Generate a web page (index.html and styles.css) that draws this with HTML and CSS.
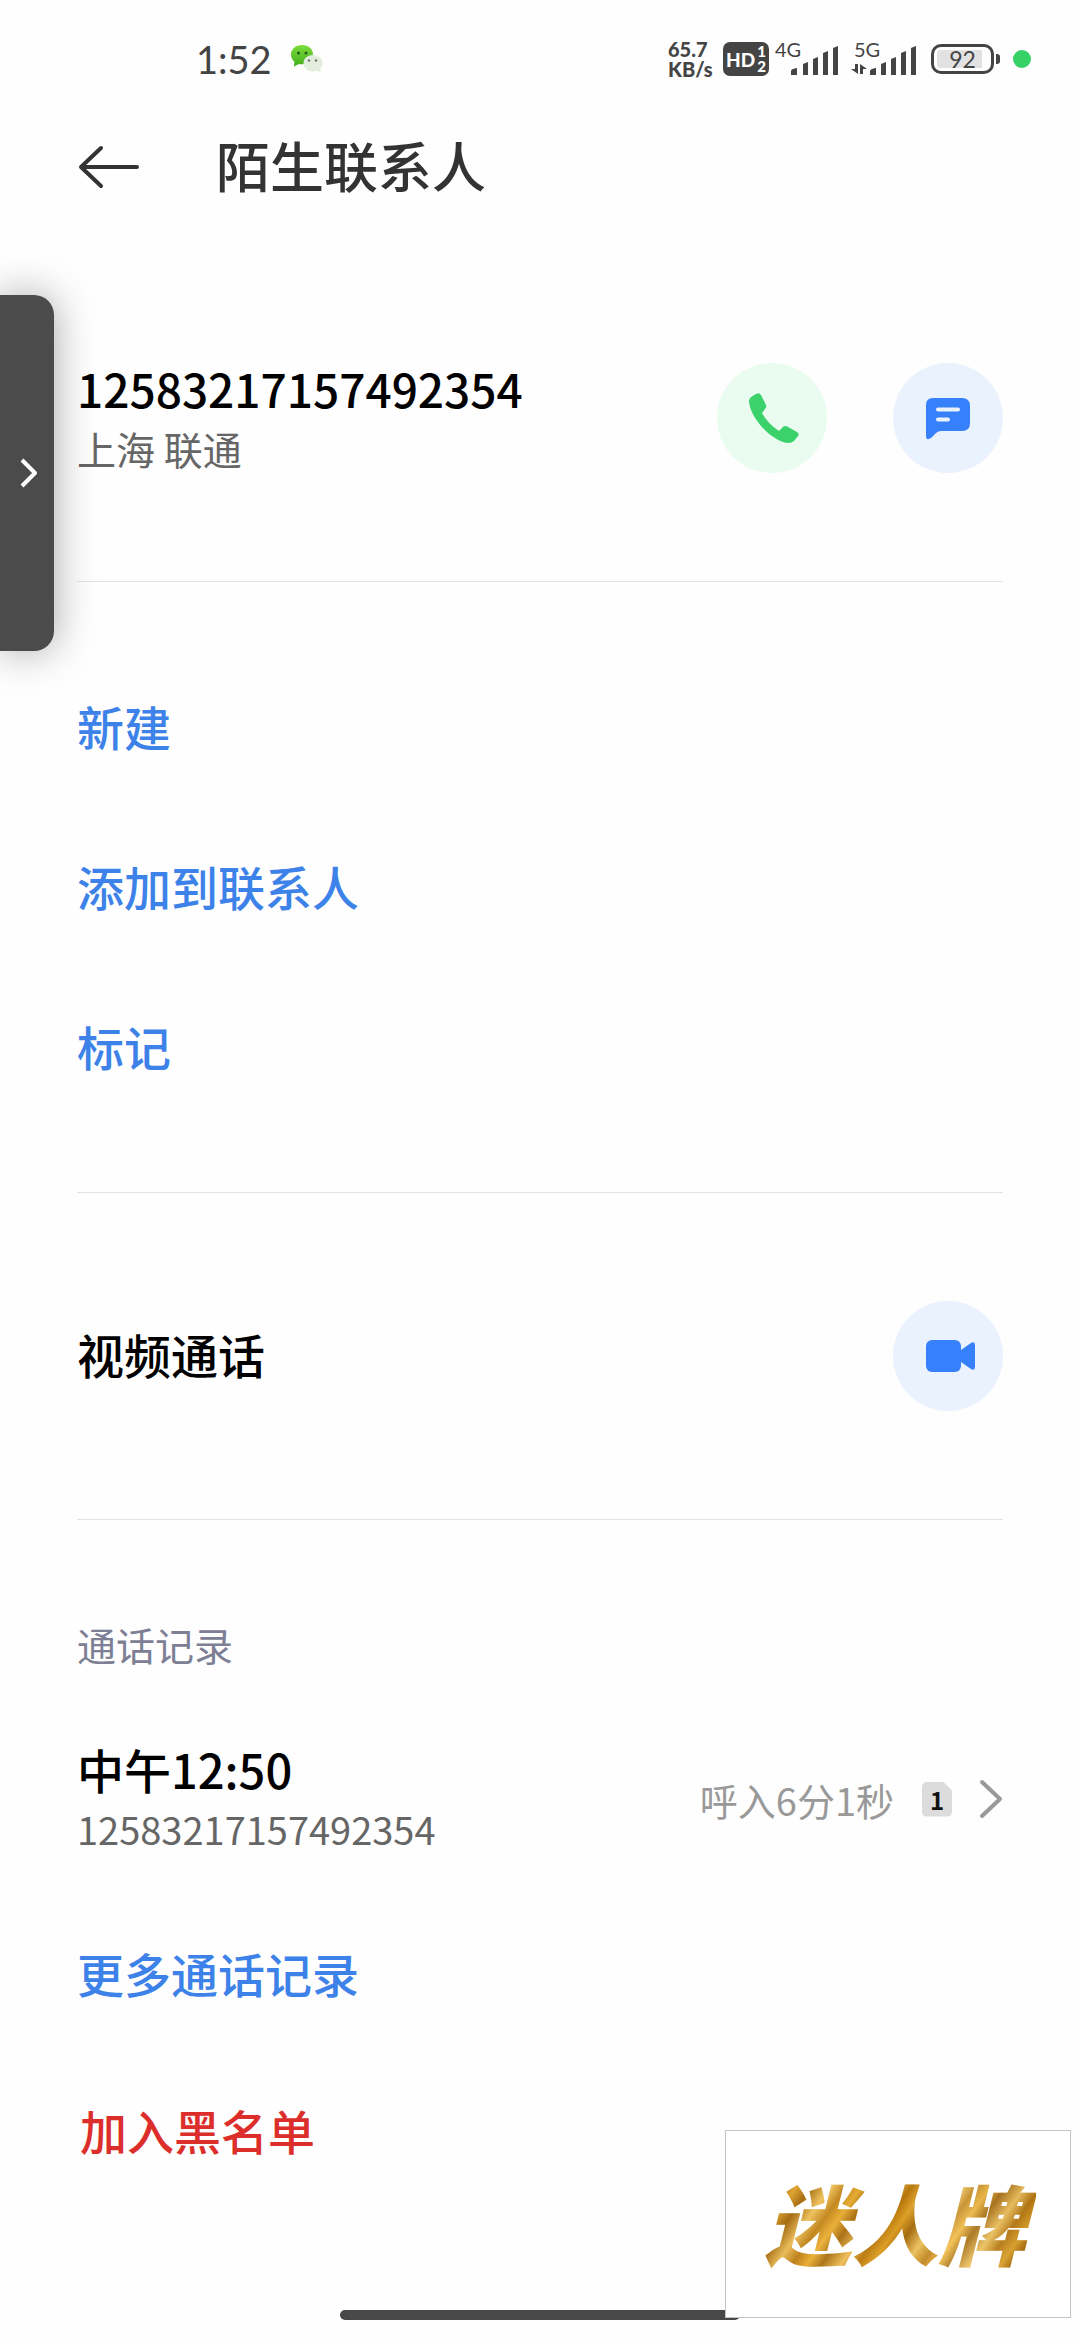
FILE: index.html
```html
<!DOCTYPE html>
<html lang="zh-CN">
    <head>
        <meta charset="UTF-8" />
        <title>陌生联系人</title>
        <meta name="viewport" content="width=device-width, initial-scale=1.0" />
        <link rel="stylesheet" href="styles.css">
    </head>
    <body>
        <div class="status-bar">
            <div class="status-left">
                <span class="clock">1:52</span>
                <svg class="wechat" viewBox="0 0 34 30">
                    <defs>
                        <linearGradient id="wechat-green" x1="0" y1="0" x2="0" y2="1">
                            <stop offset="0" stop-color="#7fdc3c" />
                            <stop offset="1" stop-color="#3fae1c" />
                        </linearGradient>
                    </defs>
                    <path fill="url(#wechat-green)" d="M12 1C5.500 1 1 5.200 1 10.500c0 3 1.400 5.500 3.400 7.200L4 22.500l5-2.600c1 .2 2 .3 3 .3 6.500 0 11-4.200 11-9.700S18.500 1 12 1z" />
                    <circle cx="8.500" cy="9" r="1.500" fill="#245c14" />
                    <circle cx="16" cy="9" r="1.500" fill="#245c14" />
                    <path fill="#e3eedf" d="M23 11c-5.500 0-9.500 3.600-9.500 8.200s4 8.300 9.500 8.300c1.500 0 2.800-.2 4-.8l4 1.800-.8-3.600c1.500-1.500 2.400-3.500 2.400-5.700C32.600 14.600 28.500 11 23 11z" />
                    <circle cx="19" cy="16.500" r="1.300" fill="#72806c" />
                    <circle cx="26" cy="16.500" r="1.300" fill="#72806c" />
                </svg>
            </div>
            <div class="status-right">
                <div class="net-speed"><span>65.7</span><span>KB/s</span></div>
                <div class="hd-badge">
                    <span>HD</span>
                    <span class="hd-sims"><span>1</span><span>2</span></span>
                </div>
                <svg class="signal" viewBox="0 -8 66 52">
                    <text x="0" y="16">4G</text>
                    <path d="M16 34v-4q0-2 6-3v7zM28 34V23l5-2v13zM38 34V18l5-2v18zM48 34V12l5-2v24zM58 34V7l5-2v29z" />
                </svg>
                <svg class="signal" viewBox="0 -8 66 52">
                    <text x="3" y="16">5G</text>
                    <path d="M19 34v-4q0-2 6-3v7zM30 34V23l5-2v13zM40 34V18l5-2v18zM50 34V12l5-2v24zM60 34V7l5-2v29z" />
                    <path d="M4 23h3v10L0 28h4zM9 33V23l7 5h-4v5z" />
                </svg>
                <div class="battery"><span>92</span></div>
                <span class="privacy-dot"></span>
            </div>
        </div>

        <header class="header">
            <button class="back" aria-label="返回">
                <svg viewBox="0 0 62 44">
                    <path d="M59 22H3M23 3L3 22l20 19" />
                </svg>
            </button>
            <h1>陌生联系人</h1>
        </header>

        <main>
            <section class="section contact">
                <div class="contact-info">
                    <div class="primary number">12583217157492354</div>
                    <div class="secondary">上海 联通</div>
                </div>
                <div class="actions">
                    <button class="round call" aria-label="拨打电话">
                        <svg viewBox="0 0 110 110">
                            <path fill="#3bd16b" d="M39 31q3-2 5 1l5 10q1 2-1 4l-3 4q6 11 17 18l4-4q2-2 5 0l9 5q3 2 1 4l-4 5q-2 2-6 2C56 79 33 56 32 38q0-2 2-4z" />
                        </svg>
                    </button>
                    <button class="round" aria-label="发送短信">
                        <svg viewBox="0 0 110 110">
                            <path fill="#3680fb" d="M40 35h29q8 0 8 8v17q0 8-8 8H48q-3 0-5 2l-5 5q-5 3-5-2V42q0-7 7-7z" />
                            <path class="bubble-lines" d="M45 46.500h20M45 56.500h10" />
                        </svg>
                    </button>
                </div>
            </section>

            <section class="section links">
                <a class="link" href="#new">新建</a>
                <a class="link" href="#add">添加到联系人</a>
                <a class="link" href="#mark">标记</a>
            </section>

            <section class="section contact">
                <div class="primary">视频通话</div>
                <button class="round" aria-label="视频通话">
                    <svg viewBox="0 0 110 110">
                        <rect x="33" y="39" width="35" height="32" rx="6" fill="#3680fb" />
                        <path fill="#3680fb" d="M68 49l10-7q4-2 4 2v22q0 4-4 2l-10-7z" />
                    </svg>
                </button>
            </section>

            <section class="history">
                <h2>通话记录</h2>
                <a class="log" href="#log">
                    <div class="log-info">
                        <div class="primary">中午12:50</div>
                        <div class="secondary log-number">12583217157492354</div>
                    </div>
                    <div class="log-meta">
                        <span class="duration">呼入6分1秒</span>
                        <span class="sim">1</span>
                        <svg class="chevron" viewBox="0 0 24 40">
                            <path d="M3 3l18 17L3 37" />
                        </svg>
                    </div>
                </a>
                <a class="link" href="#more">更多通话记录</a>
                <a class="link danger" href="#block">加入黑名单</a>
            </section>
        </main>

        <button class="side-panel" aria-label="展开侧栏">
            <svg viewBox="0 0 20 32">
                <path d="M3 3l13 13L3 29" />
            </svg>
        </button>
        <div class="home-bar"></div>
        <div class="watermark"><span>迷人牌</span></div>
    </body>
</html>
```
FILE: styles.css
```css
* {
    margin: 0;
    padding: 0;
    box-sizing: border-box;
}

body {
    font-family: "Noto Sans CJK SC", "Noto Sans", sans-serif;
    background: #fefefe;
    color: #000;
    min-height: 100vh;
}

button {
    border: none;
    background: none;
    cursor: pointer;
}

a {
    color: inherit;
    text-decoration: none;
}

svg {
    display: block;
}

/* status bar */
.status-bar {
    height: 118px;
    padding: 0 49px 0 196px;
    display: flex;
    align-items: center;
    justify-content: space-between;
    color: #444;
}

.status-left,
.status-right {
    display: flex;
    align-items: center;
}

.status-left {
    gap: 18px;
}

.clock {
    font-family: Lato, sans-serif;
    font-size: 38px;
    line-height: 48px;
}

.wechat {
    width: 34px;
    height: 30px;
}

.net-speed {
    display: flex;
    flex-direction: column;
    font-family: Lato, sans-serif;
    font-size: 20px;
    font-weight: 900;
    line-height: 20px;
    width: 55px;
}

.hd-badge {
    width: 46px;
    height: 34px;
    margin-right: 6px;
    border-radius: 7px;
    background: #444;
    color: #fefefe;
    display: flex;
    align-items: center;
    justify-content: center;
    gap: 2px;
    font-family: Lato, sans-serif;
    font-size: 19px;
    font-weight: 900;
}

.hd-sims {
    display: flex;
    flex-direction: column;
    font-size: 15px;
    line-height: 15px;
}

.signal {
    width: 66px;
    height: 52px;
    margin-right: 10px;
    fill: #444;
}

.signal text {
    font-family: Lato, sans-serif;
    font-size: 20px;
}

.battery {
    position: relative;
    width: 63px;
    height: 30px;
    margin: 0 19px 0 4px;
    padding: 3px;
    border: 3px solid #444;
    border-radius: 10px;
    background: linear-gradient(90deg, #e2e2e2 88%, #fefefe 88%) content-box;
    display: flex;
    align-items: center;
    justify-content: center;
    font-family: Lato, sans-serif;
    font-size: 23px;
    line-height: 24px;
}

.battery::after {
    content: "";
    position: absolute;
    right: -9px;
    top: 7px;
    width: 4px;
    height: 10px;
    border-radius: 0 3px 3px 0;
    background: #444;
}

.privacy-dot {
    width: 18px;
    height: 18px;
    border-radius: 50%;
    background: #36d167;
}

/* title row */
.header {
    height: 98px;
    margin-bottom: 39px;
    padding: 0 78px;
    display: flex;
    align-items: center;
    gap: 76px;
    color: #333;
}

.back svg {
    width: 62px;
    height: 44px;
    fill: none;
    stroke: #333;
    stroke-width: 4;
    stroke-linecap: round;
    stroke-linejoin: round;
}

.header h1 {
    padding-bottom: 4px;
    font-size: 54px;
    font-weight: 500;
    line-height: 72px;
}

/* sections */
.section {
    margin: 0 77px;
    border-bottom: 1px solid #e2e2e2;
}

.contact {
    min-height: 327px;
    display: flex;
    align-items: center;
    justify-content: space-between;
}

.primary {
    padding-bottom: 4px;
    font-size: 47px;
    font-weight: 500;
    line-height: 56px;
}

.primary.number {
    font-size: 46px;
}

.secondary {
    font-size: 39px;
    line-height: 56px;
    color: #666;
}

.actions {
    display: flex;
    gap: 66px;
}

.round {
    width: 110px;
    height: 110px;
    border-radius: 50%;
    background: #eaf2fe;
}

.round.call {
    background: #eafbf0;
}

.bubble-lines {
    fill: none;
    stroke: #eaf2fe;
    stroke-width: 4;
    stroke-linecap: round;
}

.links {
    padding: 65px 0;
}

.link {
    display: flex;
    align-items: center;
    height: 160px;
    padding-bottom: 4px;
    font-size: 47px;
    font-weight: 500;
    color: #3d82e8;
}

.link.danger {
    height: 154px;
    padding-left: 3px;
    color: #dc2f2c;
}

/* call history */
.history {
    padding: 94px 77px 0;
}

.history h2 {
    margin-bottom: 45px;
    font-size: 39px;
    font-weight: 400;
    line-height: 60px;
    color: #7d8095;
}

.log {
    height: 160px;
    margin-bottom: 15px;
    display: flex;
    align-items: center;
    justify-content: space-between;
}

.log-number,
.duration {
    font-size: 38px;
}

.log-meta {
    display: flex;
    align-items: center;
    color: #999;
}

.sim {
    width: 30px;
    height: 35px;
    margin: 0 27px 0 28px;
    border-radius: 5px;
    background: #dcdcdc;
    clip-path: polygon(0 0, 70% 0, 100% 26%, 100% 100%, 0 100%);
    color: #111;
    font-size: 24px;
    font-weight: 700;
    line-height: 35px;
    text-align: center;
}

.chevron {
    width: 24px;
    height: 40px;
    fill: none;
    stroke: #999;
    stroke-width: 4;
    stroke-linecap: round;
    stroke-linejoin: round;
}

/* floating pieces */
.side-panel {
    position: fixed;
    left: 0;
    top: 295px;
    width: 54px;
    height: 356px;
    padding-left: 19px;
    border-radius: 0 20px 20px 0;
    background: #4b4b4b;
    box-shadow: 0 0 40px rgba(0, 0, 0, 0.35);
}

.side-panel svg {
    width: 20px;
    height: 32px;
    fill: none;
    stroke: #fff;
    stroke-width: 4;
    stroke-linejoin: round;
}

.home-bar {
    position: fixed;
    left: 50%;
    bottom: 20px;
    width: 400px;
    height: 10px;
    margin-left: -200px;
    border-radius: 5px;
    background: #484848;
}

.watermark {
    position: fixed;
    right: 9px;
    bottom: 22px;
    width: 346px;
    height: 188px;
    border: 1px solid #c4c4c4;
    background: #fff;
    display: flex;
    align-items: center;
    justify-content: center;
}

.watermark span {
    padding: 0 10px 6px 4px;
    font-size: 87px;
    font-style: italic;
    font-weight: 900;
    line-height: 110px;
    background:
        repeating-linear-gradient(125deg, rgba(120, 66, 0, 0.5) 0, rgba(255, 226, 140, 0.5) 16px, rgba(150, 88, 0, 0.4) 29px, rgba(255, 200, 70, 0.3) 41px, rgba(120, 66, 0, 0.5) 53px),
        linear-gradient(100deg, #bd7f14, #e5ab3a 25%, #c98812 50%, #f0c566 68%, #b5760d);
    -webkit-background-clip: text;
    background-clip: text;
    color: transparent;
}
```
